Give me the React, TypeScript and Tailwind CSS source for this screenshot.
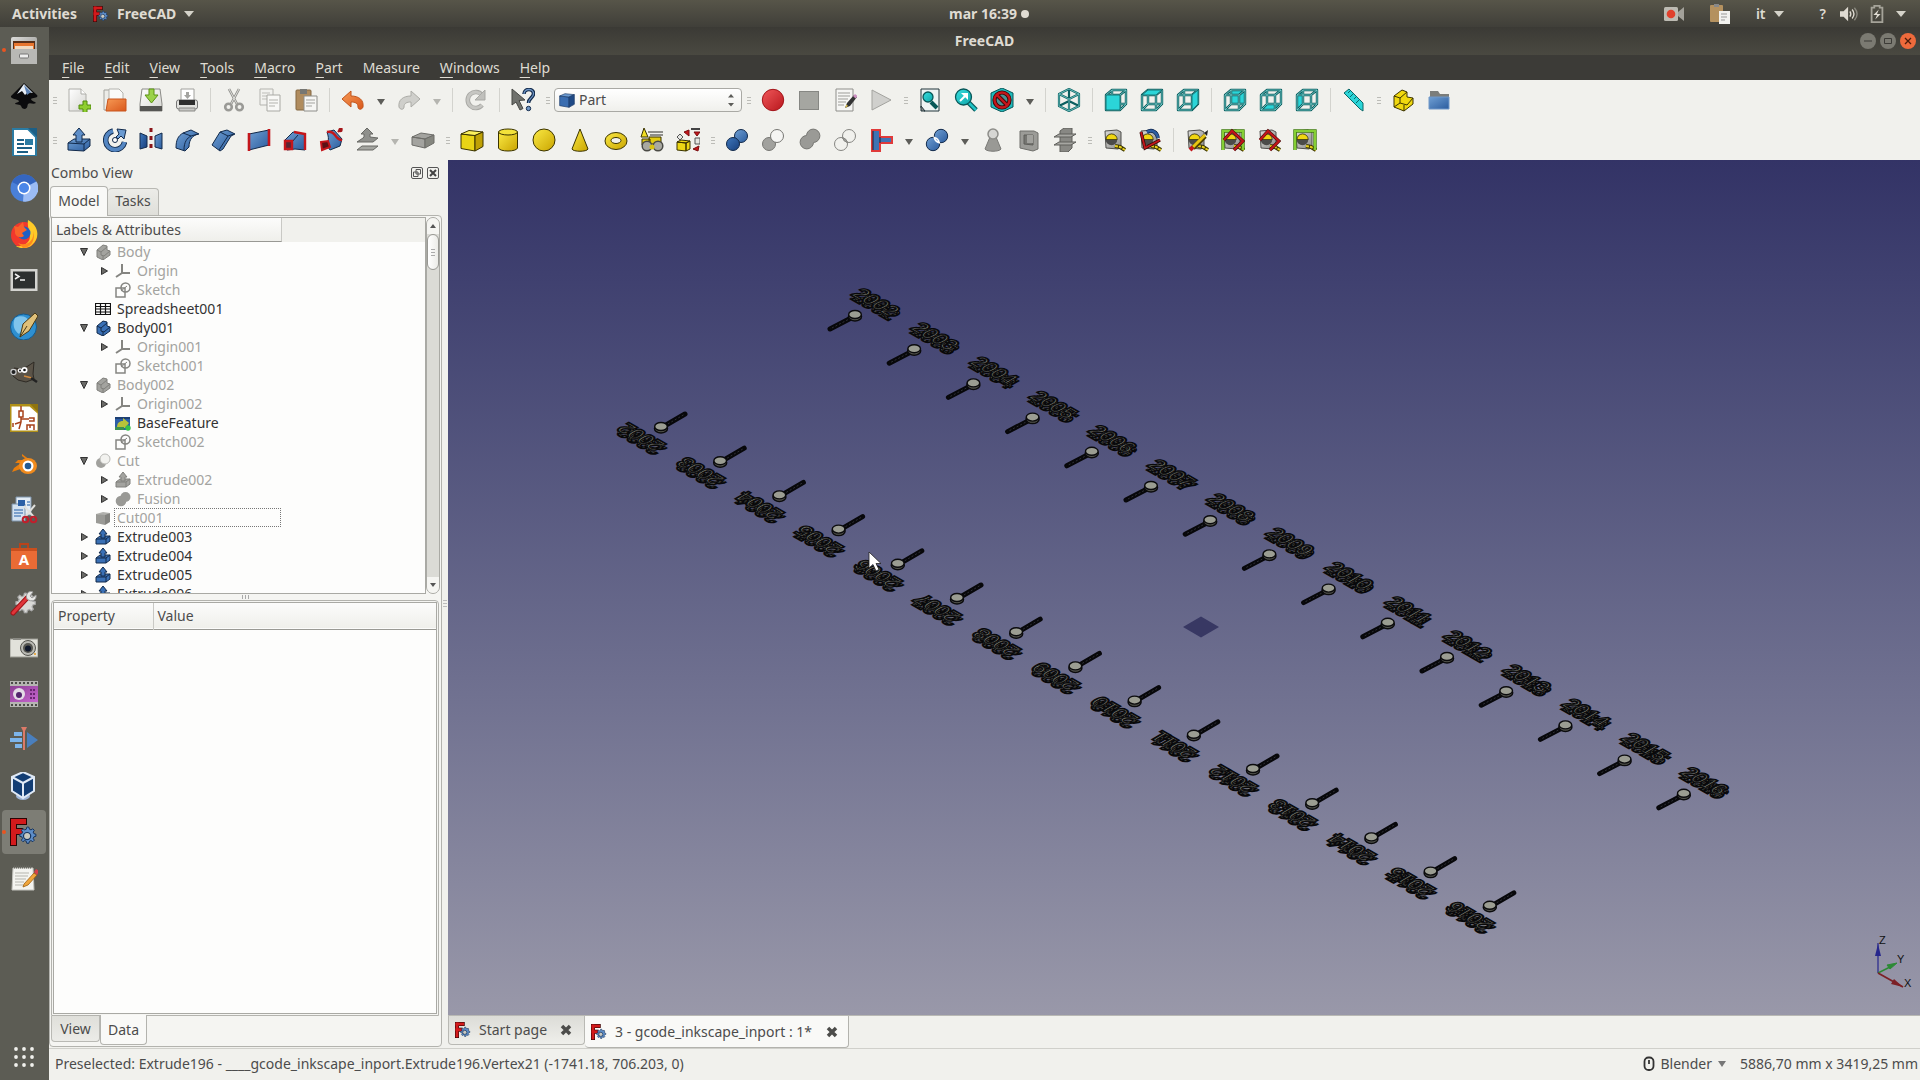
import React from "react";

type Kids = { children?: React.ReactNode };

function Svg({ children, box = 24, size = "size-6" }: Kids & { box?: number; size?: string }) {
  return (
    <svg viewBox={`0 0 ${box} ${box}`} className={`${size} shrink-0`} fill="none" aria-hidden="true">
      {children}
    </svg>
  );
}

function Grad({ id, a, b }: { id: string; a: string; b: string }) {
  return (
    <linearGradient id={id} x1="0" y1="0" x2="1" y2="1">
      <stop offset="0" stopColor={a} />
      <stop offset="1" stopColor={b} />
    </linearGradient>
  );
}

function Defs() {
  return (
    <svg className="absolute size-0" aria-hidden="true">
      <defs>
        <Grad id="blue" a="#6f9fd3" b="#2b5c9e" />
        <Grad id="deep" a="#3f78bd" b="#173f7c" />
        <Grad id="yellow" a="#fbea45" b="#c9a400" />
        <Grad id="red" a="#f0585a" b="#b8161c" />
        <Grad id="gray" a="#b4b4b0" b="#8b8b87" />
        <Grad id="orange" a="#f79a55" b="#d9581c" />
        <Grad id="teal" a="#37dfe0" b="#0fa5a8" />
        <Grad id="white" a="#ffffff" b="#d6d6d2" />
        <Grad id="steel" a="#dcdcda" b="#8b8b88" />
        <Grad id="purple" a="#8c3f94" b="#c765cf" />
      </defs>
    </svg>
  );
}

/* ---------- shared shapes ---------- */

const GEAR =
  "M16 8.5l1.4.2.5 2 1.6.7 1.8-1.1 1.5 1.5-1.1 1.8.7 1.6 2 .5v2.1l-2 .5-.7 1.6 1.1 1.8-1.5 1.5-1.8-1.1-1.6.7-.5 2h-2.1l-.5-2-1.6-.7-1.8 1.1-1.5-1.5 1.1-1.8-.7-1.6-2-.5v-2.1l2-.5.7-1.6-1.1-1.8 1.5-1.5 1.8 1.1 1.6-.7.5-2z";

function FreeCadLogo({ size }: { size: string }) {
  return (
    <Svg box={28} size={size}>
      <g fill="#2a0505">
        <rect x="0" y="0" width="7" height="28" />
        <rect x="0" y="0" width="17" height="7" />
        <rect x="0" y="10" width="13" height="7" />
      </g>
      <g fill="#d31a1c">
        <rect x="1" y="1" width="5" height="26" />
        <rect x="1" y="1" width="15" height="5" />
        <rect x="1" y="11" width="11" height="5" />
      </g>
      <g transform="translate(1.5 .5)">
        <path d={GEAR} fill="#5d8dc8" stroke="#16335c" strokeWidth="1" />
        <circle cx="15.6" cy="17.6" r="3.6" fill="#c9c9c0" stroke="#16335c" strokeWidth="1.2" />
      </g>
    </Svg>
  );
}

function WireCube({ face, solid }: { face: string; solid?: boolean }) {
  const lines = "M2 7h14v15H2zM8 2h14v14H8zM2 7l6-5M16 7l6-5M16 22l6-6M2 22l6-6";
  return (
    <Svg>
      <path d={face} fill="#2bd5d8" />
      <path d={lines} stroke="#0c5f60" strokeWidth="2.4" strokeLinejoin="round" />
      <path d={lines} stroke="#7fd4d3" strokeWidth=".8" />
      {solid && <path d={face} fill="#2bd5d8" stroke="#0c5f60" strokeWidth=".8" />}
    </Svg>
  );
}

function Tape({ children }: Kids) {
  return (
    <Svg>
      <path d="M3 3l12-1 4 2v15l-3 2-12-1z" fill="url(#steel)" stroke="#4e4e4b" />
      <circle cx="9.5" cy="11.5" r="5.8" fill="#4b4b49" />
      <path d="M4 11.5a5.6 5.6 0 0 1 11.2 0z" fill="#f0d612" stroke="#2f2c08" strokeWidth=".7" />
      <path d="M13 18l5 1 5 3" stroke="#3d3803" strokeWidth="4" />
      <path d="M13 18l5 1 5 3" stroke="#e9d01a" strokeWidth="2" strokeDasharray="3 1" />
      {children}
    </Svg>
  );
}

function Spheres({ a, b, line = "#5f5f5c", mid }: { a: string; b: string; line?: string; mid?: string }) {
  return (
    <Svg>
      <circle cx="16" cy="8" r="6.5" fill={b} stroke={line} />
      <circle cx="8" cy="16" r="6.5" fill={a} stroke={line} />
      {mid && <path d="M9.5 9.7a6.5 6.5 0 0 1 5 4.8 6.5 6.5 0 0 1-5-4.8z" fill={mid} stroke={line} />}
    </Svg>
  );
}

function Block({ fill, line, top, side, size }: { fill: string; line: string; top: string; side: string; size?: string }) {
  return (
    <Svg size={size}>
      <path d="M1 6l14 1.5V23L1 20.500z" fill={fill} stroke={line} />
      <path d="M1 6l8-3.500L23 4l-8 3.500z" fill={top} stroke={line} />
      <path d="M15 7.500L23 4v14.500L15 23z" fill={side} stroke={line} />
    </Svg>
  );
}

/* ---------- toolbar icons ---------- */

const DARK = "#122a4b";

const ic: Record<string, React.ReactNode> = {
  new: (
    <Svg>
      <path d="M2 1h12l5 5v17H2z" fill="url(#white)" stroke="#aeaea9" />
      <path d="M14 1v5h5" fill="#fff" stroke="#aeaea9" />
      <path d="M16 13h4v4h4v4h-4v3.500h-4V21h-4v-4h4z" fill="#8fce2f" stroke="#4f8a0b" />
    </Svg>
  ),
  open: (
    <Svg>
      <path d="M1 2h8l1 2h8v18H1z" fill="#ecece8" stroke="#a3a39d" />
      <path d="M6 1h10l4 4v11H6z" fill="#fafaf8" stroke="#b3b3ae" />
      <path d="M5 11h18v12H3z" fill="url(#orange)" stroke="#c9541c" />
    </Svg>
  ),
  save: (
    <Svg>
      <path d="M3 1h18l2 15v7H1v-7z" fill="url(#white)" stroke="#8b8b87" />
      <path d="M1 18h22v5H1z" fill="#555553" />
      <path d="M10 1h5v6h4l-6.500 8L6 7h4z" fill="#9bd24a" stroke="#5b9313" />
    </Svg>
  ),
  print: (
    <Svg>
      <path d="M6 1h13v13H6z" fill="#fff" stroke="#a0a09c" />
      <path d="M11 4h3v3h2l-3.500 4L9 7h2z" fill="#a3a3a0" />
      <rect x="1.500" y="12" width="21" height="9" rx="2" fill="#e2e2df" stroke="#777" />
      <rect x="4" y="12" width="16" height="5" fill="#2f2f2f" />
      <path d="M4 20h16v3H4z" fill="#c9c9c6" stroke="#8a8a87" />
    </Svg>
  ),
  cut: (
    <Svg>
      <path d="M7 1l8 15M17 1L9 16" stroke="#8e8e8a" strokeWidth="2.600" />
      <path d="M7 1l8 15M17 1L9 16" stroke="#dededb" strokeWidth="1" />
      <circle cx="6.500" cy="19" r="3.300" stroke="#9a9a96" strokeWidth="2.600" />
      <circle cx="17.500" cy="19" r="3.300" stroke="#9a9a96" strokeWidth="2.600" />
    </Svg>
  ),
  copy: (
    <Svg>
      <path d="M2 1h13v16H2z" fill="#f2f2ef" stroke="#b3b3ae" />
      <path d="M4 5h8M4 8h8M4 11h8" stroke="#bdbdb9" />
      <path d="M9 7h13v16H9z" fill="#f8f8f6" stroke="#a9a9a4" />
      <path d="M11 12h9M11 15h9M11 18h6" stroke="#b3b3ae" />
    </Svg>
  ),
  paste: (
    <Svg>
      <rect x="2" y="2" width="15" height="20" rx="1" fill="#b08c5e" stroke="#836640" />
      <path d="M6 1h7v5H6z" fill="#777773" />
      <path d="M10 8h13v15H10z" fill="#f6f6f4" stroke="#8e8e8a" />
      <path d="M12 12h9M12 15h9M12 18h6" stroke="#a3a39f" />
    </Svg>
  ),
  undo: (
    <Svg>
      <path d="M1 11l9-8v5c8 0 13 4 12 11-1 3-5 3-5 0 0-4-3-5-7-5v5z" fill="url(#orange)" stroke="#c2551c" />
    </Svg>
  ),
  redo: (
    <Svg>
      <path d="M23 11l-9-8v5C6 8 1 12 2 19c1 3 5 3 5 0 0-4 3-5 7-5v5z" fill="#cfcfcb" stroke="#acaca7" />
    </Svg>
  ),
  refresh: (
    <Svg>
      <path d="M18 17a8 8 0 1 1 0-10" stroke="#a9a9a5" strokeWidth="4.600" />
      <path d="M18 17a8 8 0 1 1 0-10" stroke="#c6c6c2" strokeWidth="2.800" />
      <path d="M21 2v10H11z" fill="#c0c0bc" stroke="#a9a9a5" />
    </Svg>
  ),
  whats: (
    <Svg>
      <path d="M1 1l13 11-6 .500 4 8-3 1.500-4-8L1 17z" fill="#6f716d" stroke="#474845" />
      <path d="M13 6c0-6 10-6 9.500 0-.300 4-5 4-5 9" stroke={DARK} strokeWidth="3.600" />
      <path d="M13 6c0-6 10-6 9.500 0-.300 4-5 4-5 9" stroke="#6d94c4" strokeWidth="1.300" />
      <circle cx="17.500" cy="20.500" r="2.200" fill="#6d94c4" stroke={DARK} />
    </Svg>
  ),
  record: (
    <Svg>
      <circle cx="12" cy="12" r="10.700" fill="url(#red)" stroke="#a31318" />
    </Svg>
  ),
  stop: (
    <Svg>
      <rect x="2.500" y="3.500" width="19" height="18" fill="#a5a6a1" stroke="#868783" />
    </Svg>
  ),
  edit: (
    <Svg>
      <path d="M3 1h17v22H3z" fill="#f6f6f4" stroke="#8e8e8a" />
      <path d="M5 5h12M5 8h12M5 11h10M5 14h8M5 17h6" stroke="#9d9d99" />
      <path d="M12 20l2-5 7-8 3 2-7 9z" fill="#333" />
      <path d="M20 8l2-2 2.500 2-2 2.500z" fill="#cb8fc0" />
      <path d="M12 20l1.500-3.500 1.500 1.500z" fill="#e8c84a" />
    </Svg>
  ),
  play: (
    <Svg>
      <path d="M3 2l19 10L3 22z" fill="#d0d0cd" stroke="#a3a39f" />
    </Svg>
  ),
  fit: (
    <Svg>
      <path d="M3 1h18v22H6l-3-3z" fill="#eef3f3" stroke="#20343a" />
      <path d="M3 18v5h4z" fill="#8b8f8f" stroke="#20343a" />
      <path d="M13 14l6 6" stroke="#085758" strokeWidth="4" />
      <circle cx="10" cy="9" r="5" fill="url(#teal)" stroke="#085758" strokeWidth="1.300" />
    </Svg>
  ),
  fitSel: (
    <Svg>
      <path d="M14 14l8 8" stroke="#085758" strokeWidth="5" />
      <path d="M14 14l8 8" stroke="#20c3c5" strokeWidth="2.500" />
      <circle cx="9.500" cy="9" r="8" fill="url(#teal)" stroke="#085758" strokeWidth="1.300" />
      <path d="M6 13l5-5" stroke="#fff" strokeWidth="2" />
      <path d="M7 5h7v7z" fill="#fff" />
    </Svg>
  ),
  noDraw: (
    <Svg>
      <path d="M12 0l11 5v14l-11 5L1 19V5z" fill="#1fb9bb" stroke="#085758" />
      <circle cx="12" cy="12" r="7.500" fill="#4a8f91" stroke="#3b0708" strokeWidth="4.200" />
      <path d="M7 7l10 10" stroke="#3b0708" strokeWidth="4.200" />
      <circle cx="12" cy="12" r="7.500" stroke="#c5161b" strokeWidth="2.400" />
      <path d="M7 7l10 10" stroke="#c5161b" strokeWidth="2.400" />
    </Svg>
  ),
  iso: (
    <Svg>
      <path d="M12 1l10 5v12l-10 5-10-5V6zM2 6l10 5 10-5M12 11v12M2 18l10-5 10 5M12 1v10" stroke="#0c5f60" strokeWidth="2.200" strokeLinejoin="round" />
      <path d="M12 1l10 5v12l-10 5-10-5V6zM2 6l10 5 10-5M12 11v12" stroke="#7fd4d3" strokeWidth=".800" />
    </Svg>
  ),
  front: <WireCube solid face="M2 7h14v15H2z" />,
  top: <WireCube solid face="M2 7l6-5h14l-6 5z" />,
  right: <WireCube solid face="M16 7l6-5v14l-6 6z" />,
  rear: <WireCube face="M8 2h14v14H8z" />,
  bottom: <WireCube face="M2 22l6-6h14l-6 6z" />,
  left: <WireCube face="M2 7l6-5v14l-6 6z" />,
  ruler: (
    <Svg>
      <path d="M2 5l5-4 14 14v8l-3-2z" fill="#2bd5d8" stroke="#0a6667" />
      <path d="M8 3l-2 2M11 6l-3 3M14 9l-2 2M17 12l-3 3" stroke="#0a6667" />
    </Svg>
  ),
  part: (
    <Svg>
      <path d="M3 8l8-6 5 2v5l6 1v6l-9 7-10-4z" fill="#f0d80f" stroke="#3d3500" />
      <path d="M3 8l6 2 7-6M9 10v5l7 2 6-7M9 15l-6 4M13 23v-6" stroke="#3d3500" />
    </Svg>
  ),
  folder: (
    <Svg>
      <path d="M3 3h8l2 3h9v8H3z" fill="#7b7d7a" />
      <path d="M2 9h20v12H2z" fill="url(#blue)" stroke="#7098c8" />
    </Svg>
  ),
  extrude: (
    <Svg>
      <path d="M1 15l6-4h16v7l-6 5-16-1z" fill="url(#blue)" stroke={DARK} />
      <path d="M1 15l16 1 6-5M17 16v7" stroke={DARK} />
      <path d="M12 0l6 7h-3v7H9V7H6z" fill="#5f8fc9" stroke={DARK} />
    </Svg>
  ),
  revolve: (
    <Svg>
      <path d="M10 3a9.500 9.500 0 1 0 11.500 11" stroke={DARK} strokeWidth="5.500" />
      <path d="M10 3a9.500 9.500 0 1 0 11.500 11" stroke="#5486c2" strokeWidth="3.800" />
      <circle cx="12" cy="12" r="2.500" fill="#fff" stroke={DARK} />
      <path d="M14 1l9 1-2 9-3-3-3 3-2-2 3-3z" fill="#6b9bd2" stroke={DARK} />
    </Svg>
  ),
  mirror: (
    <Svg>
      <path d="M1 5l7 3v11l-7 2z" fill="url(#deep)" stroke={DARK} />
      <path d="M23 5l-7 3v11l7 2z" fill="url(#blue)" stroke={DARK} />
      <path d="M12 0v24" stroke="#8a1418" strokeWidth="3" strokeDasharray="4 4" />
    </Svg>
  ),
  fillet: (
    <Svg>
      <path d="M1 20c0-8 2-12 7-15l8-3 8 4c-6 1-10 5-10 13l-4 4z" fill="url(#blue)" stroke={DARK} />
      <path d="M16 8l-8-3M9 22c0-8 3-12 7-14l7-2" stroke={DARK} />
    </Svg>
  ),
  chamfer: (
    <Svg>
      <path d="M1 17L9 4l7-2 8 4-4 2-8 13-3 2z" fill="url(#blue)" stroke={DARK} />
      <path d="M9 4l8 4 6-2M17 8L8 22" stroke={DARK} />
    </Svg>
  ),
  ruled: (
    <Svg>
      <path d="M2 6l20-4v15L2 22z" fill="url(#blue)" stroke={DARK} />
      <path d="M2 5v18M22 1v17" stroke="#c4161b" strokeWidth="2.600" />
    </Svg>
  ),
  loft: (
    <Svg>
      <path d="M2 12l8-8 12 2v16l-10-1-8 1z" fill="url(#blue)" stroke={DARK} />
      <path d="M9 14l6-7" stroke={DARK} />
      <path d="M11 4l11 2v16" stroke="#c4161b" strokeWidth="2.400" />
      <path d="M2 13h7v8H2z" fill="#5a2433" stroke="#c4161b" strokeWidth="2.400" />
    </Svg>
  ),
  sweep: (
    <Svg>
      <path d="M8 4l7-2 8 9-2 7-10 4-4-6c3-3 3-6 1-12z" fill="url(#blue)" stroke={DARK} />
      <path d="M8 4c4-1 6 0 8 3s4 5 7 5M19 4l4-4" stroke="#c4161b" strokeWidth="2.400" />
      <path d="M2 14l7-1 2 6-8 3z" fill="#5a1216" stroke="#c4161b" strokeWidth="2" />
      <circle cx="21.500" cy="2" r="2.200" fill="#a3161a" />
    </Svg>
  ),
  offset: (
    <Svg>
      <path d="M12 0l6 6h-3v3l8 1-5 4H2l6-4 1-1V6H6z" fill="#8f908c" stroke="#686965" />
      <path d="M2 22l5-4h16l-5 4z" fill="#a5a6a1" stroke="#686965" />
    </Svg>
  ),
  thick: (
    <Svg>
      <path d="M1 9l13 2v9L1 17zM1 9l9-4 13 2-9 4z" fill="#a3a39f" stroke="#6d6d69" />
      <path d="M14 11l9-4v8l-9 5z" fill="#85867f" stroke="#6d6d69" />
    </Svg>
  ),
  box: <Block fill="#e9d415" top="#fbf05c" side="#bfa105" line="#3a3300" />,
  cyl: (
    <Svg>
      <path d="M2.500 4v16c1 4 18 4 19 0V4z" fill="url(#yellow)" stroke="#3a3300" />
      <ellipse cx="12" cy="4" rx="9.500" ry="3" fill="#f3e23a" stroke="#3a3300" />
    </Svg>
  ),
  sphere: (
    <Svg>
      <circle cx="12" cy="12" r="11" fill="url(#yellow)" stroke="#3a3300" />
    </Svg>
  ),
  cone: (
    <Svg>
      <path d="M12 1l8 20c-1 3-15 3-16 0z" fill="url(#yellow)" stroke="#3a3300" />
    </Svg>
  ),
  torus: (
    <Svg>
      <ellipse cx="12" cy="13" rx="11" ry="8.500" fill="url(#yellow)" stroke="#3a3300" />
      <ellipse cx="12" cy="12.500" rx="5" ry="3" fill="#f1f1ed" stroke="#3a3300" />
    </Svg>
  ),
  prims: (
    <Svg>
      <path d="M4 0l4 9H1z" fill="#f1de22" stroke="#3a3300" />
      <path d="M8 4h15M10 7h13" stroke="#6f6f6b" strokeWidth="1.500" />
      <path d="M9 9h12v7H9zM2 11h8v6H2z" fill="#e2cb12" stroke="#3a3300" />
      <circle cx="7" cy="18" r="4.800" fill="#a9a9a1" stroke="#4a4a45" strokeWidth="1.500" />
      <circle cx="18" cy="18" r="4.800" fill="#a9a9a1" stroke="#4a4a45" strokeWidth="1.500" />
      <circle cx="12" cy="19" r="2.500" fill="#d9c211" />
    </Svg>
  ),
  shape: (
    <Svg>
      <path d="M1 14l9 1v8l-9-1zM1 14l4-2 9 1-4 2zM10 15l4-2v8l-4 2z" fill="#ecd714" stroke="#3a3300" />
      <path d="M4 6l3 3-3 3-3-3z" fill="#e5e5e2" stroke="#555" />
      <path d="M8 4l5-2v6zM18 4h6l-3 4z" fill="#c4161b" stroke="#7a0d10" />
      <path d="M15 1h9" stroke="#444" strokeWidth="2" />
      <path d="M19 10h5v6h-5z" fill="#e5e5e2" stroke="#555" />
      <path d="M23 18l-1 5-5-2z" fill="#c4161b" stroke="#7a0d10" />
    </Svg>
  ),
  bool: <Spheres a="url(#deep)" b="url(#blue)" line={DARK} />,
  cutB: (
    <Svg>
      <circle cx="8" cy="16" r="6.500" fill="#a1a19d" stroke="#777773" />
      <circle cx="16" cy="8" r="6.500" fill="#f5f5f3" stroke="#777773" />
    </Svg>
  ),
  fuse: (
    <Svg>
      <path d="M9.500 7.500a6.700 6.700 0 1 1 7 7 6.700 6.700 0 1 1-7-7z" fill="#9a9a96" stroke="#777773" />
    </Svg>
  ),
  common: <Spheres a="none" b="none" mid="#a1a19d" line="#868682" />,
  joint: (
    <Svg>
      <path d="M3 2h8v7h12v6H11v8H3z" fill="#3f73b4" stroke="#e03a3a" strokeWidth="2" />
      <path d="M4 3v19M11 9v6" stroke="#14223b" />
    </Svg>
  ),
  split: (
    <Svg>
      <circle cx="16" cy="8" r="6.700" fill="url(#blue)" stroke={DARK} />
      <circle cx="8" cy="16" r="6.700" fill="url(#blue)" stroke={DARK} />
      <path d="M9.300 9.500a6.700 6.700 0 0 1 5 5.200 6.700 6.700 0 0 1-5-5.200z" fill="#6a97cd" stroke="#fff" strokeWidth="1.500" />
    </Svg>
  ),
  check: (
    <Svg>
      <path d="M9 9h6l5 12c-2 3-14 3-16 0z" fill="#999995" stroke="#7a7a76" />
      <circle cx="12" cy="6" r="5" fill="#d6d6d3" stroke="#8d8d89" strokeWidth="1.500" />
    </Svg>
  ),
  defeat: (
    <Svg>
      <path d="M3 3h14l4 2v16l-5 2-13-3z" fill="#9b9b97" stroke="#6f6f6b" />
      <path d="M7 7h9v10l-9-1z" fill="#757571" stroke="#5f5f5b" />
      <path d="M10 7h6v8h-6z" fill="#a1a19d" />
    </Svg>
  ),
  sections: (
    <Svg>
      <path d="M7 3l4-3h8v20l-4 4H7z" fill="#888884" stroke="#5f5f5b" />
      <path d="M1 9l5-3h17l-5 3zM1 17l5-3h17l-5 3z" fill="#a6a6a2" stroke="#5f5f5b" />
    </Svg>
  ),
  tape: <Tape />,
  tapeAng: (
    <Tape>
      <path d="M9 4c5-3 10 0 11 6" stroke="#10264a" strokeWidth="3.800" />
      <path d="M3 4l4 16 15-8" stroke="#3a0808" strokeWidth="3.200" />
      <path d="M9 4c5-3 10 0 11 6" stroke="#2d5ca0" strokeWidth="2.400" />
      <path d="M3 4l4 16 15-8" stroke="#c4161b" strokeWidth="1.800" />
    </Tape>
  ),
  tapeClr: (
    <Tape>
      <path d="M8 20L20 8" stroke="#4d3f00" strokeWidth="5" />
      <path d="M8 19L20 7" stroke="#e8c512" strokeWidth="3" />
      <path d="M19 5l4-3-1 6z" fill="#222" />
      <path d="M5 22l3-3" stroke="#c4161b" strokeWidth="4" />
    </Tape>
  ),
  tapeAll: (
    <Tape>
      <path d="M2 22V3h20v19" stroke="#3f7c0c" strokeWidth="3.400" />
      <path d="M2 22V3h20v19" stroke="#85cf34" strokeWidth="2" />
      <path d="M3 12l8-9 11 10-9 9" stroke="#4b0a0b" strokeWidth="3.200" />
      <path d="M3 12l8-9 11 10-9 9" stroke="#c4161b" strokeWidth="2" />
    </Tape>
  ),
  tape3d: (
    <Tape>
      <path d="M3 12l8-9 11 10-9 9" stroke="#4b0a0b" strokeWidth="3.200" />
      <path d="M3 12l8-9 11 10-9 9" stroke="#c4161b" strokeWidth="2" />
    </Tape>
  ),
  tapeDelta: (
    <Tape>
      <path d="M2 22V3h20v19" stroke="#3f7c0c" strokeWidth="3.400" />
      <path d="M2 22V3h20v19" stroke="#85cf34" strokeWidth="2" />
    </Tape>
  ),
};

function Tool({ name, label }: { name: string; label: string }) {
  return (
    <button type="button" aria-label={label} className="flex h-10 w-9 shrink-0 items-center justify-center">
      {ic[name]}
    </button>
  );
}

const Tools = ({ list }: { list: string[][] }) => (
  <>
    {list.map(([n, l]) => (
      <Tool key={n} name={n} label={l} />
    ))}
  </>
);

function Drop({ dim }: { dim?: boolean }) {
  return (
    <button type="button" aria-label="More options" className="flex h-10 w-5 shrink-0 items-center justify-center pt-1">
      <svg viewBox="0 0 8 6" className={dim ? "h-1.5 w-2 fill-[#b5b5b0]" : "h-1.5 w-2 fill-[#5d5d59]"}>
        <path d="M0 0h8L4 6z" />
      </svg>
    </button>
  );
}

const Sep = () => (
  <div className="flex w-[11px] shrink-0 justify-center">
    <div className="h-6 w-px bg-[#d3d3ce]" />
  </div>
);

const Grip = ({ first }: { first?: boolean }) => (
  <div className={first ? "flex w-3 shrink-0 flex-col items-center gap-0.5" : "flex w-[13px] shrink-0 flex-col items-center gap-0.5"}>
    <div className="h-px w-1 bg-[#bcbcb7]" />
    <div className="h-px w-1 bg-[#bcbcb7]" />
    <div className="h-px w-1 bg-[#bcbcb7]" />
  </div>
);

function Toolbars() {
  return (
    <div className="bg-[#f1f1ed]">
      <div className="flex h-10 items-center">
        <Grip first />
        <Tools list={[["new", "New"], ["open", "Open"], ["save", "Save"], ["print", "Print"]]} />
        <Sep />
        <Tools list={[["cut", "Cut"], ["copy", "Copy"], ["paste", "Paste"]]} />
        <Sep />
        <Tool name="undo" label="Undo" />
        <Drop />
        <Tool name="redo" label="Redo" />
        <Drop dim />
        <Sep />
        <Tool name="refresh" label="Refresh" />
        <Sep />
        <Tool name="whats" label="What's this?" />
        <Grip />
        <div className="flex h-6 w-[188px] shrink-0 items-center gap-1 rounded border border-[#a9a9a4] bg-linear-to-b from-white to-[#f0f0ec] pr-1.5 pl-1">
          <Block size="size-4" fill="#3a6db0" top="#6b9ad0" side="#1f4a86" line="#1b3b68" />
          <select aria-label="Workbench" className="min-w-0 flex-1 appearance-none bg-transparent text-sm text-[#4c4c4c] outline-none">
            <option>Part</option>
          </select>
          <svg viewBox="0 0 8 14" className="h-3.5 w-2 fill-[#5d5d59]">
            <path d="M1 4.500l3-3.500 3 3.500zM1 10l3 3.500L7 10z" />
          </svg>
        </div>
        <Grip />
        <Tools list={[["record", "Record macro"], ["stop", "Stop macro"], ["edit", "Edit macros"], ["play", "Run macro"]]} />
        <Grip />
        <Tools list={[["fit", "Fit all"], ["fitSel", "Fit selection"], ["noDraw", "Draw style"]]} />
        <Drop />
        <Sep />
        <Tool name="iso" label="Axonometric" />
        <Sep />
        <Tools list={[["front", "Front"], ["top", "Top"], ["right", "Right"]]} />
        <Sep />
        <Tools list={[["rear", "Rear"], ["bottom", "Bottom"], ["left", "Left"]]} />
        <Sep />
        <Tool name="ruler" label="Measure distance" />
        <Grip />
        <Tools list={[["part", "Create part"], ["folder", "Create group"]]} />
      </div>
      <div className="flex h-10 items-center">
        <Grip first />
        <Tools
          list={[
            ["extrude", "Extrude"], ["revolve", "Revolve"], ["mirror", "Mirror"], ["fillet", "Fillet"], ["chamfer", "Chamfer"],
            ["ruled", "Ruled surface"], ["loft", "Loft"], ["sweep", "Sweep"], ["offset", "Offset"],
          ]}
        />
        <Drop dim />
        <Tool name="thick" label="Thickness" />
        <Grip />
        <Tools
          list={[
            ["box", "Cube"], ["cyl", "Cylinder"], ["sphere", "Sphere"], ["cone", "Cone"], ["torus", "Torus"],
            ["prims", "Create primitives"], ["shape", "Shape builder"],
          ]}
        />
        <Grip />
        <Tools list={[["bool", "Boolean"], ["cutB", "Cut shapes"], ["fuse", "Union"], ["common", "Intersection"], ["joint", "Connect"]]} />
        <Drop />
        <Tool name="split" label="Boolean fragments" />
        <Drop />
        <Tools list={[["check", "Check geometry"], ["defeat", "Defeaturing"], ["sections", "Cross-sections"]]} />
        <Grip />
        <Tools list={[["tape", "Measure linear"], ["tapeAng", "Measure angular"]]} />
        <Sep />
        <Tools list={[["tapeClr", "Clear all"], ["tapeAll", "Toggle all"], ["tape3d", "Toggle 3D"], ["tapeDelta", "Toggle delta"]]} />
      </div>
    </div>
  );
}

/* ---------- launcher ---------- */

const apps: [string, React.ReactNode][] = [
  ["Files", <>
    <rect x="1" y="1" width="26" height="27" rx="2" fill="url(#steel)" />
    <rect x="3" y="5" width="22" height="9" fill="#5a2f18" />
    <path d="M4 7h20v7H4z" fill="#e9752e" /><path d="M5 10h18v4H5z" fill="#f3d9c0" />
    <path d="M1 13h26v15H1z" fill="#b8b8b5" /><rect x="9.500" y="18" width="9" height="4" rx="1" fill="#eee" stroke="#777" />
  </>],
  ["Inkscape", <>
    <path d="M14 1l13 12c2 3-4 3-6 4 1 3 4 2 5 4-3 2-6-1-8 1-1 2 0 4-3 5-4 0-3-3-5-4l-5-1c0-2 4-1 4-3-2-2-9-2-8-5z" fill="#0b0b0d" />
    <path d="M14 2l9 9-5-1-3 3-3-4-5 3z" fill="#e7eef6" /><path d="M14 3l7 7-4 3z" fill="#5d82b4" />
  </>],
  ["LibreOffice Writer", <>
    <path d="M3 1h15l8 8v19H3z" fill="#fff" stroke="#2b7ba3" strokeWidth="2" /><path d="M18 0h9v9z" fill="#1c5f86" />
    <path d="M7 12h7M7 16h7M7 20h15M7 24h11" stroke="#1c5f86" strokeWidth="2" /><rect x="15" y="11" width="8" height="6" fill="#2b7ba3" />
  </>],
  ["Chromium", <>
    <circle cx="14" cy="14" r="13.500" fill="#4a80d8" /><path d="M14 14L2 8a13.500 13.500 0 0 1 24-.500z" fill="#3566c0" />
    <path d="M14 14l12.500-6.500A13.500 13.500 0 0 1 13 27.500z" fill="#9bbcf5" /><circle cx="14" cy="14" r="6.500" fill="#fff" /><circle cx="14" cy="14" r="5" fill="#4a86e8" />
  </>],
  ["Firefox", <>
    <circle cx="14" cy="15" r="13" fill="#f2382c" /><path d="M18 0c10 5 13 17 4 25-4 4-12 4-16 1 9 1 14-4 14-10 0-5-3-8-2-16z" fill="#ffca28" />
    <path d="M8 23c8 4 17-2 15-12 3 9-2 17-10 17z" fill="#ff8a1c" /><circle cx="14" cy="13" r="6.500" fill="#1f5fc4" />
    <path d="M4 6l4 1 5-5 1 5 3 3-5 3 2 3c-4 3-10 0-9-5z" fill="#f9632a" />
  </>],
  ["Terminal", <>
    <rect x="0.500" y="3" width="27" height="22" fill="#d3d3cf" /><rect x="3" y="5.500" width="22" height="17" fill="#2d302f" />
    <path d="M5 8l4 2.500L5 13M10 14h5" stroke="#f2f2f2" strokeWidth="1.500" />
  </>],
  ["Scribus", <>
    <circle cx="13.500" cy="15" r="13" fill="#2e8fd0" stroke="#155a8c" /><path d="M5 6c5-3 12-2 14 3L9 22C4 19 2 12 5 6z" fill="#7fc4ec" />
    <path d="M10 25l3-13 12-11 3 3-9 15z" fill="#dfc07a" stroke="#4c3a14" /><path d="M10 25l7-11" stroke="#4c3a14" />
  </>],
  ["GIMP", <>
    <path d="M4 10l8 1 6-3 6-4-1 12 1 5-8 3-8-2-5-4z" fill="#5a5348" stroke="#2e2a24" /><circle cx="3.500" cy="14" r="2.600" fill="#222" stroke="#ccc" strokeWidth="1.200" />
    <circle cx="10" cy="12.500" r="2.200" fill="#fff" /><circle cx="14.500" cy="12" r="3" fill="#fff" /><circle cx="14.500" cy="12" r="1.300" fill="#111" /><circle cx="10" cy="12.500" r="1" fill="#111" />
    <path d="M14 18l8 2" stroke="#d28a3c" strokeWidth="1.600" /><path d="M21 20l6 4" stroke="#222" strokeWidth="2.500" />
  </>],
  ["Circuit Editor", <>
    <path d="M0 1h20l9 8v19H0z" fill="#fff" stroke="#b09018" strokeWidth="3" /><path d="M20 0h9v9z" fill="#8f7410" />
    <path d="M11 2v5M9 7h4v6H9zM11 13v5l-6 2M11 15h8M19 14h5v3h-5M3 19v4M11 18l-2 7M17 26v-5h7v5M20 21v3" stroke="#a8411a" strokeWidth="1.500" />
  </>],
  ["Blender", <>
    <path d="M12 4l12 9-5 3-17 6 2-4 7-5H5l3-3h9l-5-4z" fill="#e87d0d" /><ellipse cx="18" cy="16" rx="9" ry="8" fill="#f08a1c" />
    <circle cx="18" cy="16" r="5.500" fill="#fff" /><circle cx="18" cy="16" r="3.300" fill="#225a93" />
  </>],
  ["PDF Shuffler", <>
    <path d="M6 1h15v18H6z" fill="#e3ecf5" stroke="#7d93ab" /><path d="M2 8h13v17H2z" fill="#d3e2f1" stroke="#7d93ab" />
    <rect x="8" y="4" width="7" height="6" fill="#2a5fa6" /><path d="M4 14h9M4 17h9M4 20h7M17 6h3M17 9h3" stroke="#5f8ac0" strokeWidth="1.500" />
    <path d="M14 10l10 11M25 9L15 21" stroke="#e0e0dd" strokeWidth="2" /><circle cx="15.500" cy="23.500" r="2.800" stroke="#c01f2c" strokeWidth="2" /><circle cx="23.500" cy="23.500" r="2.800" stroke="#c01f2c" strokeWidth="2" />
  </>],
  ["Ubuntu Software", <>
    <path d="M10 6V2h8v4" stroke="#b8431b" strokeWidth="2" /><path d="M1 6h26v21H1z" fill="#ea6b35" /><path d="M1 6h26v3H1z" fill="#c94f1e" />
    <text x="14" y="23" textAnchor="middle" fontSize="15" fontWeight="700" fill="#fff">A</text>
  </>],
  ["Tweaks", <>
    <g transform="translate(-4 -5) scale(1.200)"><path d={GEAR} fill="#d9d9d6" stroke="#aaa" /></g>
    <path d="M3 25L17 10" stroke="#9e1418" strokeWidth="5" strokeLinecap="round" /><path d="M3 25L17 10" stroke="#e0353a" strokeWidth="3" strokeLinecap="round" />
    <path d="M17 11c-2-5 2-9 6-7l-3 4 2 2 4-3c1 5-4 8-9 4z" fill="#e8e8e6" stroke="#999" />
  </>],
  ["Camera", <>
    <path d="M0 5h28v18H0z" fill="#e1e1da" stroke="#9a9a92" /><path d="M3 4h8v2H3z" fill="#8a8a84" /><circle cx="18" cy="14" r="7.500" fill="#b9b9b3" stroke="#55554f" />
    <circle cx="18" cy="14" r="5" fill="#55554f" /><circle cx="18" cy="14.500" r="3" fill="#10182a" /><circle cx="25" cy="20" r="1" fill="#e89a1c" />
  </>],
  ["Screencast", <>
    <path d="M0 1h28v26H0z" fill="#b5b5b1" /><path d="M1 3h26M1 25h26" stroke="#4c4c49" strokeWidth="2" strokeDasharray="2 2" />
    <path d="M0 6h28v16H0z" fill="url(#purple)" /><circle cx="9" cy="14" r="6" fill="#e4dce6" /><circle cx="9" cy="15" r="3" fill="#54246e" />
    <path d="M20 10h6M20 14h6M20 18h6" stroke="#6a2672" strokeWidth="2" strokeDasharray="2 1" />
  </>],
  ["Shotcut", <>
    <path d="M4 8h8M0 14h12M5 20h7" stroke="#7db4ea" strokeWidth="4" /><path d="M17 6l11 8-11 8z" fill="#4a7fbd" />
    <path d="M11 1h6l-2 4v19h-2V5z" fill="#dd7a68" />
  </>],
  ["VirtualBox", <>
    <ellipse cx="13" cy="24" rx="7" ry="4" fill="#9fb6d8" /><path d="M13 0l11 5v14l-11 7L2 19V5z" fill="#123d74" stroke="#dfe9f6" strokeWidth="2" />
    <path d="M2 5l11 6 11-6M13 11v14" stroke="#dfe9f6" strokeWidth="2" />
  </>],
  ["FreeCAD", null],
  ["Notes", <>
    <path d="M3 4h20l1 22H2z" fill="#f4f4f0" stroke="#c2c2bc" /><path d="M4 3h18" stroke="#66665f" strokeWidth="3" strokeDasharray="1 1" />
    <path d="M5 9h14M5 12h13M5 15h11M5 18h9M5 21h8" stroke="#b5b5ae" /><path d="M14 20l10-11 3 2-9 10-5 2z" fill="#f0a63c" stroke="#9c6010" strokeWidth=".800" /><path d="M24 8l2-3 3 2-2 4z" fill="#d6404a" />
  </>],
];

function Launcher() {
  return (
    <nav aria-label="Launcher" className="flex w-[49px] shrink-0 flex-col bg-[#5c5c54]">
      {apps.map(([label, art]) => (
        <button
          key={label}
          type="button"
          aria-label={label}
          className="relative flex h-[46px] w-full shrink-0 items-center justify-center pr-px"
        >
          {label === "FreeCAD" && <span className="absolute inset-y-px left-0.5 w-11 rounded bg-[#7d7d75]" />}
          {(label === "FreeCAD" || label === "Files") && <span className="absolute left-0.5 size-1 rounded-full bg-[#e95420]" />}
          <span className="relative flex">
            {art ? <Svg box={28} size="size-7">{art}</Svg> : <FreeCadLogo size="size-7" />}
          </span>
        </button>
      ))}
      <button type="button" aria-label="Show applications" className="mt-auto flex h-[46px] items-center justify-center pr-px">
        <Svg box={20} size="size-5">
          {[2, 10, 18].map((y) => [2, 10, 18].map((x) => <circle key={`${x}-${y}`} cx={x} cy={y} r="1.900" fill="#f1f1ed" />))}
        </Svg>
      </button>
    </nav>
  );
}

/* ---------- top bars ---------- */

const Caret = () => (
  <svg viewBox="0 0 10 6" className="h-1.5 w-2.5 fill-[#d5d3ca]" aria-hidden="true">
    <path d="M0 0h10L5 6z" />
  </svg>
);

function TopBar() {
  return (
    <header className="flex h-[27px] shrink-0 items-center bg-linear-to-b from-[#575549] to-[#403f39] pr-3.5 pl-3 text-sm font-bold text-[#dfdbd2]">
      <div className="flex flex-1 items-center">
        <button type="button">Activities</button>
        <button type="button" className="ml-4 flex items-center gap-2">
          <FreeCadLogo size="size-4" />
          FreeCAD
          <Caret />
        </button>
      </div>
      <button type="button" className="ml-15 flex items-center gap-1">
        mar 16:39
        <span className="size-2 rounded-full bg-[#dfdbd2]" />
      </button>
      <div className="flex flex-1 items-center justify-end">
        <Svg box={20} size="size-5">
          <rect x="0" y="3" width="14" height="14" rx="1.500" fill="#bdbbb3" /><path d="M14 8l6-5v14l-6-5z" fill="#a3a19a" /><circle cx="7" cy="10" r="4.300" fill="#e0402c" />
        </Svg>
        <span className="ml-6.5"><Svg box={20} size="size-5">
          <rect x="0" y="1" width="13" height="17" rx="1" fill="#b4915f" /><path d="M4 0h5v3H4z" fill="#888" /><path d="M9 7h11v13H9z" fill="#f2f2ef" /><path d="M11 10h6M11 13h6M11 16h4" stroke="#999" />
        </Svg></span>
        <button type="button" className="ml-6.5 flex items-center gap-2 font-semibold">it <Caret /></button>
        <button type="button" aria-label="System menu" className="ml-9 flex items-center gap-2.5">
          <span className="mr-1 font-semibold">?</span>
          <Svg box={20} size="size-4.5">
            <path d="M0 7h4l5-5v16l-5-5H0z" fill="#dfdbd2" /><path d="M11 7q2 3 0 6M13.500 5q4 5 0 10" stroke="#dfdbd2" strokeWidth="1.500" /><path d="M16 3q6 7 0 14" stroke="#8b897f" strokeWidth="1.500" />
          </Svg>
          <Svg box={20} size="size-4.5">
            <path d="M4 3h3V1h6v2h3v16H4z" stroke="#a5a399" strokeWidth="2" /><path d="M12 5l-6 6h4l-2 5 6-6h-4z" fill="#dfdbd2" />
          </Svg>
          <Caret />
        </button>
      </div>
    </header>
  );
}

function TitleBar() {
  const round = "flex size-4 items-center justify-center rounded-full";
  return (
    <div className="flex h-7 shrink-0 items-center bg-linear-to-b from-[#3b3a35] to-[#4a4941] pr-1">
      <div className="w-[60px]" />
      <h1 className="flex-1 text-center text-sm font-bold text-[#dfdbd2]">FreeCAD</h1>
      <div className="flex gap-1">
        <button type="button" aria-label="Minimize" className={`${round} bg-[#7b7a72]`}>
          <Svg box={16} size="size-4"><path d="M4 8h8" stroke="#3c3b37" /></Svg>
        </button>
        <button type="button" aria-label="Maximize" className={`${round} bg-[#7b7a72]`}>
          <Svg box={16} size="size-4"><path d="M4.500 5.500h7v5h-7z" stroke="#3c3b37" /></Svg>
        </button>
        <button type="button" aria-label="Close" className={`${round} bg-[#ee6a3c]`}>
          <Svg box={16} size="size-4"><path d="M5 5l6 6M11 5l-6 6" stroke="#4b1c0b" strokeWidth="1.300" /></Svg>
        </button>
      </div>
    </div>
  );
}

function MenuBar() {
  const items = ["File", "Edit", "View", "Tools", "Macro", "Part", "Measure", "Windows", "Help"];
  return (
    <nav aria-label="Menu" className="flex h-[25px] shrink-0 items-center bg-[#3c3b37] pl-[3px] text-sm text-[#dfdbd2]">
      {items.map((m) => (
        <button key={m} type="button" className="px-2.5">
          {m === "Measure" ? m : (<><span className="underline underline-offset-4">{m[0]}</span>{m.slice(1)}</>)}
        </button>
      ))}
    </nav>
  );
}

/* ---------- combo view ---------- */

const bodyArt = (f: string, l: string) => (
  <><path d="M2 6l6-5 4 1v4l3 1v4l-7 5-6-3z" fill={f} stroke={l} /><path d="M2 6l4 2 6-5M6 8v3l3 1 6-5M8 16v-4" stroke={l} /></>
);
const extrudeArt = (f: string, l: string) => (
  <><path d="M1 10l4-3h10v5l-4 3H1z" fill={f} stroke={l} /><path d="M1 10h10l4-3M11 10v5" stroke={l} /><path d="M8 0l4 5h-2v4H6V5H4z" fill={f} stroke={l} /></>
);

const treeArt: Record<string, React.ReactNode> = {
  bodyOff: bodyArt("#a3a39f", "#80807c"),
  body: bodyArt("#3a70b5", "#122a4b"),
  origin: <path d="M7 1v9L1 14M7 10h8" stroke="#858581" strokeWidth="2" />,
  sketch: <><path d="M1 6h9v9H1z" stroke="#858581" strokeWidth="1.500" /><circle cx="10.500" cy="5.500" r="4.500" stroke="#858581" strokeWidth="1.500" /><path d="M6 9l6-5" stroke="#858581" /></>,
  sheet: <path d="M.500 2.500h15v11H.500zM.500 5.500h15M.500 8h15M.500 11h15M5.500 2v11M10.500 2v11" stroke="#111" strokeWidth="1.200" />,
  base: <><path d="M0 2h15v13H0z" fill="#2d5ea6" /><path d="M0 2h15v2H0z" fill="#1d3f73" /><path d="M2 13c0-5 2-7 6-7V3l6 5-4 5z" fill="#b9c23a" /><path d="M0 12h9v3H0z" fill="#3d8f4f" /><circle cx="13" cy="13" r="2.700" fill="#36c04a" /></>,
  cut: <><circle cx="6" cy="10" r="5" fill="#a1a19d" /><circle cx="10" cy="6" r="5" fill="#f2f2ef" stroke="#bbbbb7" /></>,
  extrudeOff: extrudeArt("#a3a39f", "#80807c"),
  extrude: extrudeArt("#3a70b5", "#122a4b"),
  fusion: <><circle cx="6" cy="10" r="5.300" fill="#999995" /><circle cx="10.500" cy="6" r="5" fill="#999995" /></>,
  solid: <><path d="M1 4l7-2 7 1-5 3z" fill="#b1b1ad" /><path d="M1 4l9 1v10l-9-2z" fill="#9a9a96" /><path d="M10 5l5-2v9l-5 3z" fill="#83837f" /></>,
};

type Row = { t: string; i: string; lv: number; a?: "open" | "shut"; off?: boolean; box?: boolean };
const rows: Row[] = [
  { t: "Body", i: "bodyOff", lv: 0, a: "open", off: true },
  { t: "Origin", i: "origin", lv: 1, a: "shut", off: true },
  { t: "Sketch", i: "sketch", lv: 1, off: true },
  { t: "Spreadsheet001", i: "sheet", lv: 0 },
  { t: "Body001", i: "body", lv: 0, a: "open" },
  { t: "Origin001", i: "origin", lv: 1, a: "shut", off: true },
  { t: "Sketch001", i: "sketch", lv: 1, off: true },
  { t: "Body002", i: "bodyOff", lv: 0, a: "open", off: true },
  { t: "Origin002", i: "origin", lv: 1, a: "shut", off: true },
  { t: "BaseFeature", i: "base", lv: 1 },
  { t: "Sketch002", i: "sketch", lv: 1, off: true },
  { t: "Cut", i: "cut", lv: 0, a: "open", off: true },
  { t: "Extrude002", i: "extrudeOff", lv: 1, a: "shut", off: true },
  { t: "Fusion", i: "fusion", lv: 1, a: "shut", off: true },
  { t: "Cut001", i: "solid", lv: 0, off: true, box: true },
  { t: "Extrude003", i: "extrude", lv: 0, a: "shut" },
  { t: "Extrude004", i: "extrude", lv: 0, a: "shut" },
  { t: "Extrude005", i: "extrude", lv: 0, a: "shut" },
  { t: "Extrude006", i: "extrude", lv: 0, a: "shut" },
];

function TreeRow({ r }: { r: Row }) {
  return (
    <li role="treeitem" aria-selected={!!r.box} className={r.lv ? "flex h-[19px] items-center pl-[43px]" : "flex h-[19px] items-center pl-[23px]"}>
      <span className="flex w-5 justify-center pr-0.5">
        {r.a && (
          <svg viewBox="0 0 8 8" className="size-2 fill-[#6b6b68] stroke-[#333]" aria-hidden="true">
            <path d={r.a === "open" ? "M.5 .5h7L4 7.500z" : "M1.500 .500L7.500 4l-6 3.500z"} />
          </svg>
        )}
      </span>
      <Svg box={16} size="size-4">{treeArt[r.i]}</Svg>
      <span
        className={
          "ml-[3px] h-[19px] border border-dotted pl-0.5 leading-[18px] " +
          (r.box ? "w-[167px] border-[#777] " : "border-transparent ") +
          (r.off ? "text-[#a3a3a0]" : "text-[#333]")
        }
      >
        {r.t}
      </span>
    </li>
  );
}

const Nub = ({ up }: { up?: boolean }) => (
  <svg viewBox="0 0 6 4" className="h-1 w-1.5 fill-[#555]" aria-hidden="true">
    <path d={up ? "M0 4l3-4 3 4z" : "M0 0l3 4 3-4z"} />
  </svg>
);

function ComboView() {
  return (
    <aside className="flex w-[393px] shrink-0 flex-col text-sm text-[#4c4c4c]">
      <div className="flex h-[25px] shrink-0 items-center gap-1 pr-[3px] pl-0.5">
        <h2 className="flex-1">Combo View</h2>
        <button type="button" aria-label="Float"><Svg box={12} size="size-3"><rect x=".5" y=".5" width="11" height="11" rx="1.500" stroke="#555" /><path d="M5 2.500h4.500V7H5zM2.500 5H7v4.500H2.500z" stroke="#555" /></Svg></button>
        <button type="button" aria-label="Close panel"><Svg box={12} size="size-3"><rect x=".5" y=".5" width="11" height="11" rx="1.500" stroke="#555" /><path d="M3 3l6 6M9 3L3 9" stroke="#444" strokeWidth="2" /></Svg></button>
      </div>
      <div className="flex h-[30px] shrink-0 items-end pl-px" role="tablist">
        <button type="button" role="tab" aria-selected="true" className="relative top-px h-[30px] w-[58px] rounded-t border border-b-0 border-[#b3b3ae] bg-[#f9f9f7] pb-0.5">Model</button>
        <button type="button" role="tab" aria-selected="false" className="h-[27px] w-[51px] rounded-t border border-b-0 border-l-0 border-[#b9b9b4] bg-linear-to-b from-[#ecece8] to-[#dfdfda] pb-0.5">Tasks</button>
      </div>
      <div className="mb-px flex min-h-0 flex-1 flex-col rounded border border-[#b3b3ae] bg-[#f5f5f2] p-px">
        <div className="flex h-[377px] shrink-0">
          <div className="flex min-w-0 flex-1 flex-col border border-[#a9a9a4] bg-[#fdfdfc]">
            <div className="flex h-6 shrink-0 bg-[#f1f1ed]">
              <div className="flex w-[230px] items-center border-r border-b border-r-[#c9c9c5] border-b-[#999994] bg-linear-to-b from-[#fcfcfb] to-[#efefeb] pl-1">Labels &amp; Attributes</div>
            </div>
            <ul role="tree" aria-label="Model tree" className="min-h-0 flex-1 overflow-hidden">
              {rows.map((r) => (
                <TreeRow key={r.t} r={r} />
              ))}
            </ul>
          </div>
          <div className="flex w-3.5 shrink-0 flex-col rounded-full border border-[#aaaaa5] bg-[#dbdbd6]">
            <div className="flex h-4 items-center justify-center rounded-t-full bg-[#f5f5f2]"><Nub up /></div>
            <div className="flex h-9 flex-col items-center justify-center gap-0.5 rounded-full border border-[#999994] bg-linear-to-r from-white to-[#ececE8]">
              <div className="h-px w-1 bg-[#aaa]" /><div className="h-px w-1 bg-[#aaa]" /><div className="h-px w-1 bg-[#aaa]" />
            </div>
            <div className="mt-auto flex h-4 items-center justify-center rounded-b-full bg-[#f5f5f2]"><Nub /></div>
          </div>
        </div>
        <div className="flex h-1.5 shrink-0 items-center justify-center gap-0.5">
          <div className="h-1 w-px bg-[#aaa]" /><div className="h-1 w-px bg-[#aaa]" /><div className="h-1 w-px bg-[#aaa]" />
        </div>
        <div className="mr-px min-h-0 flex-1 rounded-t border border-[#b3b3ae] p-px">
          <div className="h-full border border-[#a9a9a4] bg-[#fdfdfc]">
            <table className="w-full table-fixed text-left">
              <thead>
                <tr className="h-[26px] border-b border-[#999994] bg-linear-to-b from-[#fcfcfb] to-[#efefeb]">
                  <th className="w-[99px] border-r border-[#c9c9c5] pl-1 font-normal">Property</th>
                  <th className="pl-1 font-normal">Value</th>
                </tr>
              </thead>
              <tbody />
            </table>
          </div>
        </div>
        <div className="flex h-[29px] shrink-0 items-start" role="tablist">
          <button type="button" role="tab" aria-selected="false" className="h-[26px] w-[49px] rounded-b border border-t-0 border-[#b9b9b4] bg-linear-to-b from-[#dfdfda] to-[#ecece8]">View</button>
          <button type="button" role="tab" aria-selected="true" className="relative -top-px h-[30px] w-[47px] rounded-b border border-t-0 border-[#b3b3ae] bg-[#f9f9f7]">Data</button>
        </div>
      </div>
    </aside>
  );
}

/* ---------- 3D view ---------- */

const years = Array.from({ length: 15 }, (_, k) => 2002 + k);

function Pin({ dx, dy }: { dx: number; dy: number }) {
  return (
    <g>
      <path d={`M0 1L${dx} ${dy}`} stroke="#07070a" strokeWidth="5" strokeLinecap="round" />
      <path d={`M0 1L${dx} ${dy}`} stroke="#3a3b40" strokeWidth=".800" strokeDasharray="2 2" />
      <ellipse cx="0" cy="1.500" rx="6.500" ry="4.500" fill="#55564f" stroke="#0b0b0d" strokeWidth="1.500" />
      <ellipse cx="0" cy="-.500" rx="6.300" ry="4" fill="#9b9d92" stroke="#0b0b0d" strokeWidth="1.400" />
    </g>
  );
}

/* A year extruded off the ground plane: base outline, side walls, then the wireframed top face. */
function Year({ y, flip }: { y: number; flip?: boolean }) {
  const m = flip ? "matrix(-.866 -.5 .866 -.5 0 0)" : "matrix(.866 .5 -.866 .5 0 0)";
  const text = { x: 0, y: 7, textAnchor: "middle" as const, fontSize: 20, transform: m };
  return (
    <g fontFamily="Liberation Sans, sans-serif" stroke="#08080a">
      <g transform="translate(0 2)"><text {...text} strokeWidth="3" fill="#08080a">{y}</text></g>
      <g transform="translate(0 -2)" aria-hidden="true"><text {...text} strokeWidth="3" fill="#08080a">{y}</text></g>
      <g transform="translate(0 1)" aria-hidden="true"><text {...text} strokeWidth=".5" strokeDasharray="2 2" stroke="#6d6e64" fill="none">{y}</text></g>
      <g transform="translate(0 -2)" aria-hidden="true"><text {...text} strokeWidth=".9" fill="#7b7c71">{y}</text></g>
    </g>
  );
}

function Viewport() {
  return (
    <div className="relative min-h-0 flex-1 overflow-hidden bg-linear-to-b from-[#333366] to-[#9998a9]">
      <svg viewBox="448 160 1472 855" preserveAspectRatio="xMidYMid slice" className="absolute inset-0 size-full" role="img" aria-label="3D model">
        <path d="M1183 627l18-10.500 18 10.500-18 10.500z" fill="#383863" />
        {years.map((y, k) => (
          <React.Fragment key={y}>
            <g transform={`translate(${855 + k * 59.2} ${315 + k * 34.2})`}><Pin dx={-25} dy={14} /></g>
            <g transform={`translate(${876 + k * 59.2} ${304 + k * 34.2})`}><Year y={y} /></g>
            <g transform={`translate(${661 + k * 59.2} ${427 + k * 34.2})`}><Pin dx={24} dy={-13} /></g>
            <g transform={`translate(${641 + k * 59.2} ${439 + k * 34.2})`}><Year y={y} flip /></g>
          </React.Fragment>
        ))}
        <path d="M869 552v16l4-3.500 3 6.500 3-1.500-3-6h5z" fill="#fff" stroke="#222" strokeWidth=".800" />
      </svg>
      <svg viewBox="0 0 44 60" className="absolute right-1.5 bottom-6 h-[60px] w-11 overflow-visible" fontFamily="Liberation Sans, sans-serif" fontSize="11" aria-label="Axis cross">
        <path d="M8 42V12" stroke="#26268c" strokeWidth="1.200" /><path d="M8 13l3 12H5z" fill="#26268c" />
        <path d="M8 42l14-7" stroke="#2c8a35" strokeWidth="1.500" /><path d="M27 32l-7 6-3-4z" fill="#2c8a35" stroke="#2c8a35" />
        <path d="M8 42l25 14" stroke="#7c2026" strokeWidth="1.800" /><path d="M33 56l-12-3 3-5z" fill="#7c2026" />
        <text x="9" y="13" fill="#111">Z</text><text x="27" y="32" fill="#111">Y</text><text x="34" y="56" fill="#111">X</text>
      </svg>
    </div>
  );
}

const CloseX = () => (
  <Svg box={12} size="size-3"><path d="M2 2l8 8M10 2l-8 8" stroke="#4c4c4a" strokeWidth="3.500" /></Svg>
);

function DocTabs() {
  return (
    <div className="flex h-[33px] shrink-0 items-start border-t border-[#b9b9b4] text-sm text-[#4c4c4c]">
      <div className="flex h-[29px] w-[137px] items-center rounded-b border border-t-0 border-[#b9b9b4] bg-linear-to-b from-[#dcdcd7] to-[#efefeb] pr-3 pl-1.5">
        <FreeCadLogo size="size-4" />
        <button type="button" className="ml-2 flex-1 text-left">Start page</button>
        <button type="button" aria-label="Close Start page"><CloseX /></button>
      </div>
      <div className="flex h-8 w-[264px] items-center rounded-b border border-t-0 border-l-0 border-[#b3b3ae] bg-[#f9f9f7] pr-2.5 pl-1.5">
        <FreeCadLogo size="size-4" />
        <button type="button" className="ml-2 flex-1 text-left whitespace-nowrap">3 - gcode_inkscape_inport : 1*</button>
        <button type="button" aria-label="Close document"><CloseX /></button>
      </div>
    </div>
  );
}

function StatusBar() {
  return (
    <footer className="flex h-8 shrink-0 items-center border-t border-[#d0d0cb] pr-0.5 pb-px pl-1.5 text-sm text-[#4c4c4c]">
      <span className="flex-1">Preselected: Extrude196 - ____gcode_inkscape_inport.Extrude196.Vertex21 (-1741.18, 706.203, 0)</span>
      <button type="button" className="mr-3.5 flex items-center gap-1.5">
        <svg viewBox="0 0 12 16" className="h-4 w-3" fill="none" aria-hidden="true">
          <rect x="1.500" y="1.500" width="9" height="12.500" rx="4" stroke="#333" strokeWidth="1.800" /><path d="M6 4v4" stroke="#333" strokeWidth="1.800" />
        </svg>
        Blender
        <svg viewBox="0 0 8 6" className="h-1.5 w-2 fill-[#777]" aria-hidden="true"><path d="M0 0h8L4 6z" /></svg>
      </button>
      <span>5886,70 mm x 3419,25 mm</span>
    </footer>
  );
}

export default function App() {
  return (
    <div className="flex h-screen flex-col overflow-hidden bg-[#f1f1ed] font-['Noto_Sans',sans-serif]">
      <Defs />
      <TopBar />
      <div className="flex min-h-0 flex-1">
        <Launcher />
        <div className="flex min-w-0 flex-1 flex-col">
          <TitleBar />
          <MenuBar />
          <Toolbars />
          <main className="flex min-h-0 flex-1">
            <ComboView />
            <div className="flex w-1.5 shrink-0 justify-center pt-[440px]">
              <div className="flex flex-col gap-0.5">
                <div className="h-px w-1 bg-[#bbb]" /><div className="h-px w-1 bg-[#bbb]" /><div className="h-px w-1 bg-[#bbb]" />
              </div>
            </div>
            <div className="flex min-w-0 flex-1 flex-col">
              <Viewport />
              <DocTabs />
            </div>
          </main>
          <StatusBar />
        </div>
      </div>
    </div>
  );
}
